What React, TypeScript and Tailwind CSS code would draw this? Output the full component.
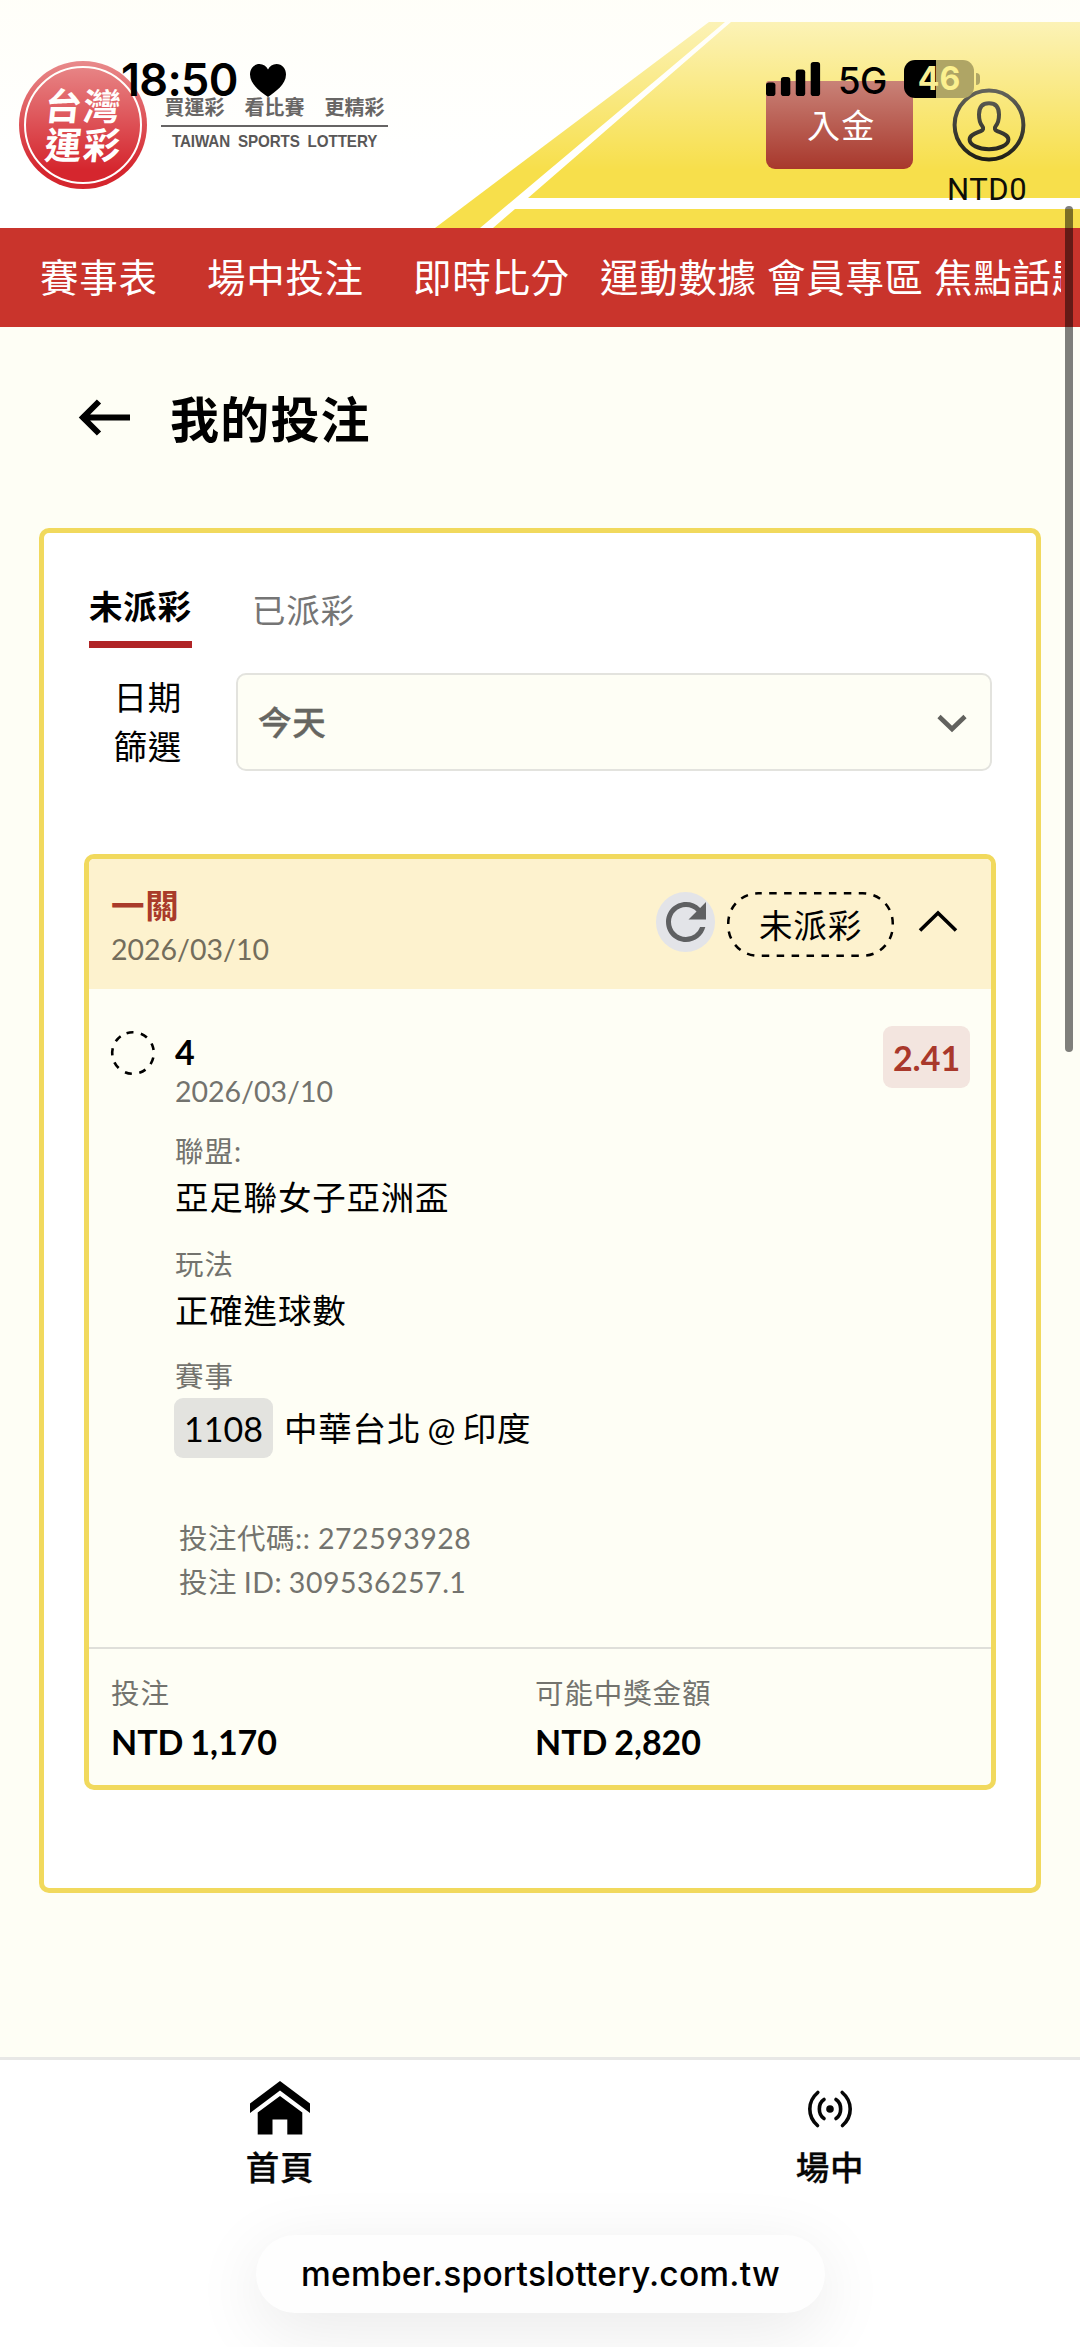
import React from "react";

const navItems = [
  { label: "賽事表", box: "w-[167px]" },
  { label: "場中投注", box: "w-[206px]" },
  { label: "即時比分", box: "w-[187px]" },
  { label: "運動數據", box: "w-[167px]" },
  { label: "會員專區", box: "w-[167px]" },
  { label: "焦點話題", box: "w-[160px]" },
];

function HeaderArt() {
  return (
    <svg className="absolute inset-0" width="1080" height="228" viewBox="0 0 1080 228">
      <g fill="#f7df4b">
        <polygon points="435,228 709,22 725,22 480,228" />
        <polygon points="528,198 731,22 1080,22 1080,198" />
        <polygon points="493,228 515,209 1080,209 1080,228" />
      </g>
    </svg>
  );
}

function Logo() {
  return (
    <div className="absolute left-[19px] top-[61px] h-32 w-32 rounded-full bg-[#d5262e] p-[5px]">
      <div className="flex h-full w-full flex-col items-center justify-center rounded-full border-[2.5px] border-white text-[37px] font-bold leading-[39px] tracking-[1.5px] text-white">
        <div className="-skew-x-6">台灣</div>
        <div className="-skew-x-6">運彩</div>
      </div>
    </div>
  );
}

function UserIcon() {
  return (
    <svg className="absolute left-[951px] top-[87px]" width="76" height="76" viewBox="0 0 76 76" fill="none" stroke="#14140c" strokeWidth="4">
      <circle cx="38" cy="38" r="34.4" />
      <path d="M38 16.200c-7.200 0-10 4.800-10 11.300c0 6 1.400 9.400 3.400 11.800c1.400 1.700 .8 3.700-1.200 4.600c-5 2.200-11.600 4-11.600 8.600c0 5.500 8.800 9.700 19.400 9.700s19.400-4.200 19.400-9.700c0-4.600-6.600-6.400-11.600-8.600c-2-.9-2.600-2.900-1.200-4.600c2-2.400 3.400-5.800 3.400-11.800c0-6.500-2.800-11.300-10-11.300z" />
    </svg>
  );
}

function StatusBar() {
  return (
    <>
      <div className="absolute left-[121px] top-[57px] font-['Inter'] text-[45px] font-semibold leading-[46px] tracking-[-0.7px] text-black">
        18:50
      </div>
      <svg className="absolute left-[250px] top-[64px]" width="36" height="33" viewBox="0 0 36 33">
        <path d="M18 33C11 28 0 20.500 0 10.500C0 4.500 4 0 9.500 0C13.300 0 16.400 2.200 18 5.600C19.600 2.200 22.700 0 26.500 0C32 0 36 4.500 36 10.500C36 20.500 25 28 18 33Z" />
      </svg>
      <svg className="absolute left-[766px] top-[62px]" width="55" height="35" viewBox="0 0 55 35">
        <rect x="0" y="20.500" width="9.400" height="13.500" rx="2.800" />
        <rect x="14.900" y="15" width="9.400" height="19" rx="2.800" />
        <rect x="29.800" y="7.500" width="9.400" height="26.500" rx="2.800" />
        <rect x="44.700" y="0" width="9.400" height="34" rx="2.800" />
      </svg>
      <div className="absolute left-[838px] top-[61px] font-['Inter'] text-[36.5px] font-medium leading-[41px] tracking-[-0.6px] text-black">
        5G
      </div>
      <div className="absolute left-[904px] top-[60px] flex h-[38px] w-[70px] items-center justify-center overflow-hidden rounded-[11px] bg-[linear-gradient(90deg,#000_0_32px,#afa565_32px)] font-['Inter'] text-[32px] font-bold leading-[38px]">
        <span className="text-[#faee93]">4</span>
        <span className="text-[#fbf08f]">6</span>
      </div>
      <div className="absolute left-[976px] top-[73px] h-3 w-[4px] rounded-r-full bg-[#afa565]" />
    </>
  );
}

function Header() {
  return (
    <header className="relative h-[228px] overflow-hidden bg-white">
      <HeaderArt />
      <Logo />
      <div className="absolute left-[766px] top-[81px] h-[88px] w-[147px] rounded-t-[3px] rounded-b-[9px] bg-[#a8372b]" />
      <UserIcon />
      <div className="absolute left-[947px] top-[173px] font-['Roboto'] text-[31px] leading-[34px] tracking-[0.6px] text-[#0d0d08]">NTD0</div>
      <div className="absolute inset-x-0 top-0 h-[170px] bg-[linear-gradient(180deg,rgba(255,254,246,0.72),rgba(255,254,246,0))]" />
      <div className="absolute left-[161px] top-[94px] flex w-[227px] flex-col items-center text-[#686665]">
        <div className="h-[31px] whitespace-pre text-[20px] font-bold leading-[27px]">買運彩　看比賽　更精彩</div>
        <div className="h-[1.5px] w-full bg-[#666464]" />
        <div className="mt-[3px] scale-x-[0.92] whitespace-nowrap font-['Liberation_Sans'] text-[16.5px] font-bold leading-[22px] tracking-[-0.1px] text-[#595757] [word-spacing:4px]">
          TAIWAN SPORTS LOTTERY
        </div>
      </div>
      <div className="absolute left-[807px] top-[101px] text-[33px] leading-[48px] tracking-[1.2px] text-white">入金</div>
      <StatusBar />
    </header>
  );
}

function NavBar() {
  return (
    <nav className="h-[99px] bg-[#c9342c]">
      <div className="flex h-full w-[1061px] items-center overflow-hidden pb-[2px] pl-[40px] text-[38.5px] leading-[56px] tracking-[0.7px] text-white">
        {navItems.map((n) => (
          <div key={n.label} className={`shrink-0 whitespace-nowrap ${n.box}`}>
            {n.label}
          </div>
        ))}
      </div>
    </nav>
  );
}

function Field({ label, value, className = "" }: { label: string; value: string; className?: string }) {
  return (
    <div className={className}>
      <div className="text-[28.5px] leading-[38px] tracking-[1px] text-[#73736e]">{label}</div>
      <div className="mt-[2px] text-[33.5px] leading-[50px] tracking-[0.8px] text-black">{value}</div>
    </div>
  );
}

function BetHeader() {
  return (
    <div className="flex h-[130px] items-start bg-[#fdf2ce] pl-[22px]">
      <div className="flex-1 pt-[24px]">
        <div className="text-[33.5px] font-bold leading-[44px] tracking-[0.8px] text-[#a93b2a]">一關</div>
        <div className="mt-[2px] text-[28.5px] leading-[40px] text-[#736d5c]">2026/03/10</div>
      </div>
      <div className="mt-[33px] flex h-[60px] w-[59px] items-center justify-center rounded-full bg-[#e3e4e8]">
        <svg width="60" height="60" viewBox="0 0 24 24" fill="#5f6062" className="shrink-0">
          <path d="M17.650 6.350A7.958 7.958 0 0 0 12 4c-4.420 0-7.990 3.580-7.990 8s3.570 8 7.990 8c3.730 0 6.840-2.550 7.730-6h-2.080A5.990 5.990 0 0 1 12 18c-3.310 0-6-2.690-6-6s2.690-6 6-6c1.660 0 3.140.69 4.220 1.780L13 11h7V4l-2.350 2.350z" />
        </svg>
      </div>
      <div className="relative ml-[12px] mt-[33px] flex h-[65px] w-[167px] items-center justify-center text-[33.5px] leading-[50px] tracking-[0.8px] text-black">
        <svg className="absolute inset-0" width="167" height="65" viewBox="0 0 167 65" fill="none" stroke="#000" strokeWidth="2.500">
          <rect x="1.250" y="1.250" width="164.500" height="62.500" rx="30" strokeDasharray="7.500 7.430" strokeDashoffset="4" />
        </svg>
        <span>未派彩</span>
      </div>
      <svg className="ml-[24px] mr-[33px] mt-[50px]" width="40" height="24" viewBox="0 0 40 24" fill="none" stroke="#000" strokeWidth="3.600">
        <path d="M2 21.500L20 4L38 21.500" />
      </svg>
    </div>
  );
}

function BetBody() {
  return (
    <div className="flex h-[660px] items-start border-b-[2.5px] border-[#dfdfda] pl-[21px] pr-[21px]">
      <svg className="mt-[41px] shrink-0" width="46" height="46" viewBox="0 0 46 46" fill="none" stroke="#000" strokeWidth="2.600">
        <circle cx="23" cy="23" r="20.800" strokeDasharray="7 7.521" transform="rotate(-108 23 23)" />
      </svg>
      <div className="ml-[19px] flex-1 pt-[43px]">
        <div className="text-[34px] font-bold leading-[40px] text-black">4</div>
        <div className="mt-[1px] text-[28.5px] leading-[36px] text-[#73736e]">2026/03/10</div>
        <Field className="mt-[23px]" label="聯盟:" value="亞足聯女子亞洲盃" />
        <Field className="mt-[23px]" label="玩法" value="正確進球數" />
        <div className="mt-[21px] text-[28.5px] leading-[40px] tracking-[1px] text-[#73736e]">賽事</div>
        <div className="mt-[2px] flex h-[60px] items-center text-[33.5px] tracking-[0.8px] text-black">
          <div className="-ml-px flex h-[60px] w-[99px] items-center justify-center rounded-[9px] bg-[#e3e3df] pt-px text-[34px] tracking-normal">
            1108
          </div>
          <div className="ml-[11px] whitespace-nowrap [word-spacing:-3px]">中華台北 @ 印度</div>
        </div>
        <div className="mt-[58px] pl-[4px] text-[28.5px] leading-[44px] tracking-[0.5px] text-[#73736e]">
          <div>投注代碼:: 272593928</div>
          <div className="[word-spacing:-1px]">投注 ID: 309536257.1</div>
        </div>
      </div>
      <div className="mt-[37px] flex h-[62px] w-[87px] items-center justify-center rounded-[9px] bg-[#f3e5df] text-[34px] font-bold text-[#a9382b]">
        2.41
      </div>
    </div>
  );
}

function BetFooter() {
  return (
    <div className="grid grid-cols-[424px_1fr] pl-[22px] pt-[24px]">
      {[
        ["投注", "NTD 1,170"],
        ["可能中獎金額", "NTD 2,820"],
      ].map(([label, value]) => (
        <div key={label}>
          <div className="text-[28.5px] leading-[40px] tracking-[0.9px] text-[#73736e]">{label}</div>
          <div className="mt-[8px] text-[34px] font-bold leading-[42px] text-black [word-spacing:-1.5px]">{value}</div>
        </div>
      ))}
    </div>
  );
}

function BottomBar() {
  return (
    <footer className="relative h-[290px] overflow-hidden border-t-[3px] border-[#e8e8e6] bg-white">
      <div className="ml-[5px] grid w-[1100px] grid-cols-2 text-[33.5px] font-medium leading-[46px] tracking-[0.8px] text-[#060606] [-webkit-text-stroke:0.3px_#060606]">
        <div className="flex flex-col items-center">
          <svg className="mt-[21px]" width="60" height="54" viewBox="0 0 60 54">
            <path d="M30 0L60 22.500V32L30 9.500L0 32V22.500Z" />
            <path d="M30 15L52.300 31.500V53.500H37.300V38.500H22.500V53.500H7.700V31.500Z" />
          </svg>
          <div className="mt-[9px]">首頁</div>
        </div>
        <div className="flex flex-col items-center">
          <svg className="mt-[29px]" width="46" height="40" viewBox="0 0 46 40" fill="none" stroke="#060606" strokeWidth="3.600" strokeLinecap="round">
            <circle cx="23" cy="20" r="3.800" fill="#060606" stroke="none" />
            <path d="M17 10.500C10.800 14.500 10.800 25.500 17 29.500M29 10.500C35.200 14.500 35.200 25.500 29 29.500" />
            <path d="M10.800 3.500C.2 12.500.2 27.500 10.500 36.500M35.200 3.500C45.800 12.500 45.800 27.500 35.500 36.500" />
          </svg>
          <div className="mt-[15px]">場中</div>
        </div>
      </div>
      <div className="absolute left-[256px] top-[175px] flex h-[78px] w-[569px] items-center justify-center rounded-full bg-[#fefefe] font-['Inter'] text-[33.5px] font-medium tracking-[0.22px] text-black shadow-[0_16px_70px_rgba(0,0,0,0.09)]">
        member.sportslottery.com.tw
      </div>
    </footer>
  );
}

export default function App() {
  return (
    <div
      lang="zh-Hant"
      className="relative h-[2347px] w-[1080px] overflow-hidden bg-[#fefef5] font-['Lato','Noto_Sans_CJK_TC',sans-serif]"
    >
      <Header />
      <NavBar />
      <div className="flex h-[183px] items-center pl-[78px]">
        <svg width="54" height="38" viewBox="0 0 54 38" fill="none" stroke="#000" strokeWidth="6" className="-mt-[2px]">
          <path d="M52 18.500H5M21 2.500L5 18.500L21 34.500" />
        </svg>
        <h1 className="ml-[38px] text-[49px] font-bold leading-[64px] tracking-[1.2px] text-black">我的投注</h1>
      </div>

      <main className="ml-[39px] mt-[18px] flex h-[1365px] w-[1002px] flex-col rounded-[10px] border-[5px] border-[#f1d95d] bg-white">
        <div className="flex items-start pl-[45px] pt-[49px]">
          <div className="w-[103px] whitespace-nowrap border-b-[7px] border-[#b02426] pb-[11px] text-[33.5px] font-bold leading-[48px] tracking-[0.8px] text-black">
            未派彩
          </div>
          <div className="ml-[60px] pt-[4px] text-[33.5px] leading-[48px] tracking-[0.8px] text-[#757575]">已派彩</div>
        </div>

        <div className="mt-[25px] flex h-[98px] items-center">
          <div className="w-[138px] text-right text-[33.5px] leading-[49px] tracking-[0.8px] text-black">
            日期
            <br />
            篩選
          </div>
          <div className="ml-[54px] flex h-[98px] w-[756px] items-center justify-between rounded-[10px] border-2 border-[#e3e3de] bg-[#fefef5] pl-[20px] pr-[23px]">
            <span className="text-[33.5px] font-medium tracking-[0.8px] text-[#666661] [-webkit-text-stroke:0.4px_#666661]">今天</span>
            <svg width="30" height="20" viewBox="0 0 30 20" fill="none" stroke="#62625e" strokeWidth="4.600" className="mt-[2px]">
              <path d="M2 3.500L15 16L28 3.500" />
            </svg>
          </div>
        </div>

        <section className="ml-[40px] mt-[83px] h-[936px] w-[912px] overflow-hidden rounded-[10px] border-[5px] border-[#f1d95d] bg-[#fefef5]">
          <BetHeader />
          <BetBody />
          <BetFooter />
        </section>
      </main>

      <div className="h-[164px]" />
      <BottomBar />

      <div className="absolute left-[1065px] top-[206px] h-[846px] w-[8px] rounded-full bg-black/50" />
    </div>
  );
}
